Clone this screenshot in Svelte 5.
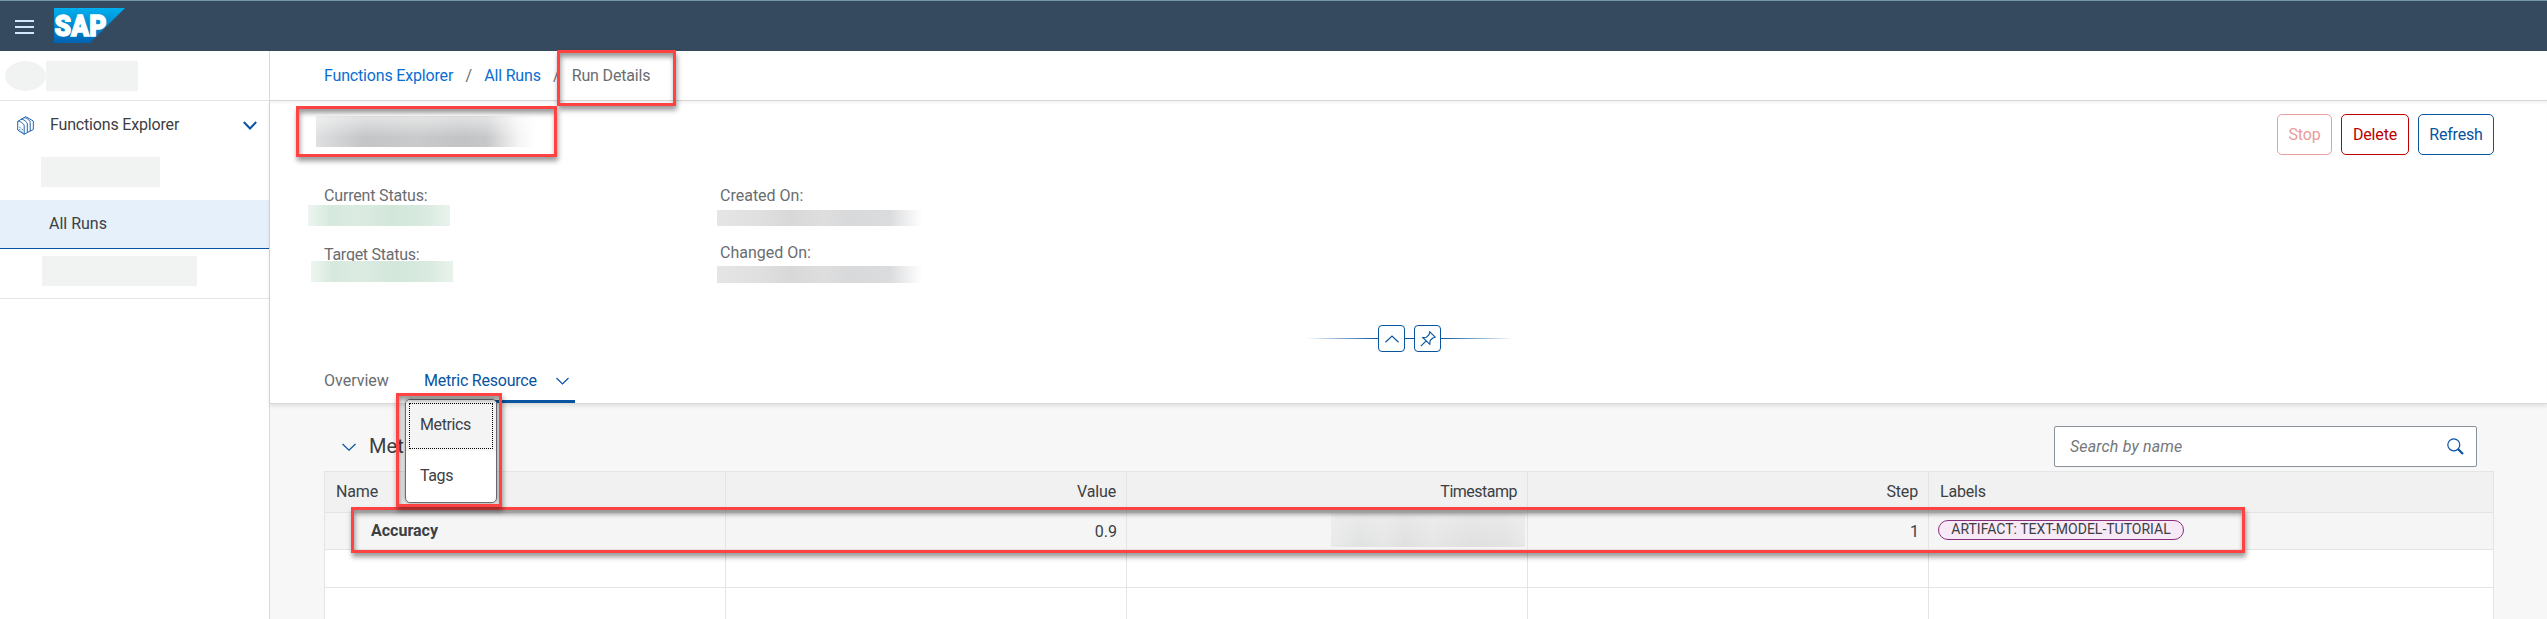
<script>
  const columns = ['Name', 'Value', 'Timestamp', 'Step', 'Labels'];
</script>

<div class="app">
  <header>
    <svg class="burger" width="19" height="14" viewBox="0 0 19 14"><path d="M0 1h19M0 7h19M0 13h19" stroke="#d1e8ff" stroke-width="2" /></svg>
    <svg class="logo" width="71" height="35" viewBox="0 0 71 35">
      <defs><linearGradient id="g" x1="0" y1="0" x2="0" y2="1"><stop offset="0" stop-color="#00b0ef" /><stop offset="1" stop-color="#0063b4" /></linearGradient></defs>
      <path d="M0 0H71L36 35H0z" fill="url(#g)" />
      <text x="0.500" y="28" font-size="30" textLength="52" lengthAdjust="spacingAndGlyphs">SAP</text>
    </svg>
  </header>
  <div class="body">
    <aside>
      <div class="user"><i class="avatar"></i><i class="username"></i></div>
      <div class="group">
        <svg width="17" height="19" viewBox="0 0 17 19" fill="none" stroke="#1f65ad" stroke-width="1"><path d="M.7 5.500v8.500l6.500 4.300V9.800C7.200 8 3 4.500.7 5.500zM.7 5.500L3.800 3.500c2.500-.8 6.500 2.500 6.500 4.500v8.500l-3.100 1.800M3.800 3.500L6.500 1.900c2.500-.8 6.700 2.500 6.700 4.500v8.700l-2.900 1.400M6.500 1.900L8.800.7l7.500 4.300v8.500l-3.100 1.600M2.300 11l1.200.8M2.300 13.400l1.200.8M4.600 13l1.200.8M4.600 15.400l1 .7" /></svg>
        <span>Functions Explorer</span>
        <svg class="chev" width="14" height="9" viewBox="0 0 14 9" fill="none" stroke="#0854a0" stroke-width="2"><path d="M.8 1L7 7.500 13.200 1" /></svg>
      </div>
      <div class="slot"><i class="s1"></i></div>
      <div class="selected"><span>All Runs</span></div>
      <div class="slot last"><i class="s2"></i></div>
    </aside>
    <main>
      <nav><a>Functions Explorer</a><b>/</b><a>All Runs</a><b>/</b><span>Run Details</span></nav>
      <section class="head">
        <div class="title"><i class="blur"></i>
          <div class="buttons"><button class="stop">Stop</button><button class="delete">Delete</button><button class="refresh">Refresh</button></div>
        </div>
        <div class="facts">
          <div class="fact f1"><span>Current Status:</span><i class="green"></i></div>
          <div class="fact f2"><span>Created On:</span><i class="gray"></i></div>
          <div class="fact f3"><span>Target Status:</span><i class="green"></i></div>
          <div class="fact f4"><span>Changed On:</span><i class="gray"></i></div>
        </div>
        <div class="snap">
          <i class="fade l"></i>
          <span class="sq"><svg width="14" height="8" viewBox="0 0 14 8" fill="none" stroke="#0854a0" stroke-width="1.200"><path d="M.5 7.300L7 1l6.500 6.300" /></svg></span>
          <i class="mid"></i>
          <span class="sq"><svg width="16" height="16" viewBox="0 0 16 16" fill="none" stroke="#0854a0" stroke-width="1.100"><path d="M.8 15.200l5.400-5.400M2.800 6.500l7 6.800.3-3.800L12.800 7l2.400-.8L9.800.8 9 3.600 6.500 6.200z" /></svg></span>
          <i class="fade r"></i>
        </div>
        <div class="tabs"><span class="overview">Overview</span><span class="tab"><span>Metric Resource</span>
          <svg width="13" height="8" viewBox="0 0 13 8" fill="none" stroke="#0854a0" stroke-width="1.200"><path d="M.5 1l6 6 6-6" /></svg></span></div>
      </section>
      <section class="content">
        <div class="toolbar">
          <svg width="14" height="8" viewBox="0 0 14 8" fill="none" stroke="#0854a0" stroke-width="1.200"><path d="M.5 1L7 7.200 13.500 1" /></svg>
          <h2>Metrics</h2>
          <div class="search"><em>Search by name</em><svg width="17" height="17" viewBox="0 0 17 17" fill="none" stroke="#0854a0"><circle cx="6.800" cy="6.800" r="6" stroke-width="1.200" /><path d="M11 11l5 5" stroke-width="2.200" /></svg></div>
        </div>
        <div class="table">
          <div class="row hd">{#each columns as c}<div><span class={c.toLowerCase()}>{c}</span></div>{/each}</div>
          <div class="row data"><div><strong>Accuracy</strong></div><div class="num">0.9</div><div class="stamp"><i></i></div><div class="num">1</div><div><span class="tag">ARTIFACT: TEXT-MODEL-TUTORIAL</span></div></div>
          <div class="row empty">{#each columns as c}<div></div>{/each}</div>
          <div class="row empty">{#each columns as c}<div></div>{/each}</div>
        </div>
      </section>
    </main>
  </div>

  <div class="menu"><div class="item focus"><span>Metrics</span></div><div class="item"><span>Tags</span></div></div>
  <div class="mark m1"></div><div class="mark m2"></div><div class="mark m4"></div><div class="mark m3"></div>
</div>

<style>
  :global(body) { background: #fff; overflow: hidden; }
  .app { position: relative; width: 2547px; height: 619px; overflow: hidden; font: 16px/20px Roboto, sans-serif; letter-spacing: -0.17px; color: #3c4044; box-sizing: border-box; }
  .app :global(*) { box-sizing: border-box; }
  i { display: block; }
  header { height: 51px; background: #354a5f; border-top: 1px solid #7698a6; display: flex; align-items: flex-start; padding-left: 15px; }
  .burger { margin-top: 19px; }
  .logo { margin: 7px 0 0 20px; }
  .logo text { font-family: Roboto, sans-serif; font-weight: 900; fill: #fff; stroke: #fff; stroke-width: 1.4; letter-spacing: 0; }
  .body { display: flex; height: 568px; }
  aside { width: 270px; border-right: 1px solid #d9d9d9; flex: none; }
  .user { height: 50px; border-bottom: 1px solid #e4e4e4; display: flex; padding: 10px 0 0 5px; }
  .avatar { width: 41px; height: 30px; border-radius: 50%; background: #f1f3f2; }
  .username { width: 92px; height: 30px; background: #f1f3f2; }
  .group { height: 49px; display: flex; align-items: center; padding: 0 12px 1px 17px; }
  .group span { margin-left: 16px; }
  .chev { margin-left: auto; }
  .slot { height: 50px; padding: 7px 0 0 41px; }
  .slot i { height: 30px; background: #f1f3f2; }
  .s1 { width: 119px; }
  .s2 { width: 155px; margin-left: 1px; }
  .slot.last { border-bottom: 1px solid #e4e4e4; }
  .selected { height: 49px; background: #e5f0fa; border-bottom: 1px solid #0854a0; padding: 14px 0 0 49px; letter-spacing: 0; }
  main { flex: 1; display: flex; flex-direction: column; }
  nav { flex: none; height: 50px; border-bottom: 1px solid #d9d9d9; display: flex; padding: 15px 0 0 54px; color: #6a6d70; }
  nav a { color: #0a6ed1; }
  nav b { font-weight: 400; width: 31px; text-align: center; }
  .head { flex: none; height: 303px; display: flex; flex-direction: column; border-bottom: 1px solid #d9d9d9; box-shadow: 0 2px 4px #0000001a, inset 0 3px 3px -1px #0000000d; position: relative; }
  .title { height: 69px; display: flex; justify-content: space-between; padding: 13px 53px 0 46px; }
  .blur { width: 224px; height: 31px; margin-top: 2px; background: linear-gradient(#ffffff88, #ffffff00 70%), linear-gradient(90deg, #dedfe0, #c4c5c7 22%, #c9cacb 45%, #c2c3c5 65%, #c6c7c9 76%, #f4f4f4 90%, #fff 98%); }
  .buttons { display: flex; gap: 9px; }
  button { height: 41px; border: 1px solid; border-radius: 5px; background: #fff; font: inherit; letter-spacing: inherit; padding: 0; }
  .stop { width: 55px; color: #eb9c9c; }
  .delete { width: 68px; color: #b00; }
  .refresh { width: 76px; color: #0854a0; }
  .facts { height: 155px; display: grid; grid-template-columns: 396px 300px; grid-template-rows: 57px 57px; padding: 16px 0 0 54px; color: #6a6d70; }
  .fact span { display: block; height: 20px; }
  .fact { display: flow-root; }
  .green { width: 142px; height: 21px; margin: -1px 0 0 -16px; background: linear-gradient(90deg, #edf5f0, #d6e9dd 16%, #dcebe2 35%, #d2e7da 60%, #d9eae0 82%, #e9f3ed); position: relative; }
  .f3 { padding-top: 2px; letter-spacing: -0.25px; }
  .f3 .green { margin: -4px 0 0 -13px; }
  .gray { width: 204px; height: 16px; margin: 4px 0 0 -3px; background: linear-gradient(90deg, #e5e5e5, #e0e0e0 20%, #d8d8d9 36%, #dededf 52%, #d8d9da 65%, #dbdcde 85%, #fcfcfc 99%); }
  .f2, .f4 { letter-spacing: 0; }
  .f4 .gray { height: 17px; margin-top: 3px; }
  .snap { height: 27px; display: flex; align-items: center; padding-left: 1036px; }
  .snap .fade { height: 1px; width: 72px; }
  .l { background: linear-gradient(90deg, #0854a000, #0854a0); }
  .r { background: linear-gradient(90deg, #0854a0, #0854a000); }
  .mid { width: 9px; height: 1px; background: #0854a0; }
  .sq { width: 27px; height: 27px; border: 1px solid #0854a0; border-radius: 4px; display: flex; align-items: center; justify-content: center; background: #fff; }
  .tabs { display: flex; padding-left: 54px; height: 51px; color: #6a6d70; }
  .tabs > span { padding-top: 19px; height: 51px; }
  .overview { width: 100px; letter-spacing: 0; }
  .tab { width: 151px; color: #0854a0; border-bottom: 3px solid #0854a0; display: flex; letter-spacing: -0.22px; }
  .tab svg { margin: 6px 6px 0 auto; }
  .content { flex: 1; background: #f7f7f7; padding: 0 53px 0 54px; }
  .toolbar { height: 67px; display: flex; padding-left: 18px; }
  .toolbar > svg { margin-top: 39px; }
  h2 { margin: 28px 0 0 13px; font: 20px/28px Roboto, sans-serif; letter-spacing: 0.1px; }
  .search { margin: 22px 17px 0 auto; width: 423px; height: 41px; border: 1px solid #89919a; border-radius: 2px; background: #fff; display: flex; align-items: center; padding: 0 12px 0 15px; justify-content: space-between; color: #74777a; letter-spacing: 0.15px; }
  .search em { font-style: italic; }
  .table { border: 1px solid #e4e4e4; border-bottom: 0; width: 2170px; }
  .row { display: grid; grid-template-columns: 401px 401px 401px 401px 1fr; background: #fff; border-bottom: 1px solid #e4e4e4; height: 38px; }
  .row > div { border-right: 1px solid #e4e4e4; display: flex; align-items: center; justify-content: flex-end; padding-right: 10px; }
  .row > div:first-child, .row > div:last-child { justify-content: flex-start; padding-left: 11px; }
  .row > div:last-child { border: 0; }
  .row.hd { height: 41px; background: #f1f1f1; }
  .timestamp { letter-spacing: -0.5px; }
  .row.data { height: 37px; background: #f5f5f5; }
  .row.data > div:first-child { padding-left: 46px; letter-spacing: 0; }
  .row.data > div:last-child { padding-left: 9px; }
  .row.data > .num { padding: 1px 9px 0 0; letter-spacing: 0; }
  .row.data > .stamp { padding: 0 2px 0 0; align-items: flex-start; }
  .stamp i { width: 194px; height: 34px; background: linear-gradient(#f0f0f099, #e0e1e000), linear-gradient(90deg, #eaeaea, #e0e2e1 15%, #e6e6e6 28%, #dedfde 38%, #e5e6e5 52%, #dedfde 72%, #e2e2e2 90%, #e8e8e8); }
  .tag { height: 20px; width: 246px; border: 1px solid #8b2e7c; border-radius: 10px; background: #f7e9f5; font-size: 14px; line-height: 17px; letter-spacing: 0; text-align: center; margin-top: -2px; white-space: nowrap; }
  .menu { position: absolute; left: 405px; top: 399px; width: 92px; height: 104px; border: 1px solid #6a6d70; border-radius: 5px; background: #fff; overflow: hidden; box-shadow: 0 0 4px #0006; letter-spacing: -0.4px; }
  .item { height: 51px; padding: 3px; }
  .item span { display: block; padding: 12px 0 0 11px; }
  .focus { background: #f4f4f4; }
  .focus span { border: 1px dotted #000; height: 46px; padding: 11px 0 0 10px; }
  .mark { position: absolute; border: 3px solid #ff4343; box-shadow: 1px 4px 5px #0006, inset 1px 4px 5px #0006; }
  .m1 { left: 557px; top: 50px; width: 119px; height: 56px; }
  .m2 { left: 296px; top: 106px; width: 261px; height: 51px; }
  .m3 { left: 396px; top: 393px; width: 106px; height: 114px; }
  .m4 { left: 351px; top: 507px; width: 1894px; height: 46px; }
</style>
